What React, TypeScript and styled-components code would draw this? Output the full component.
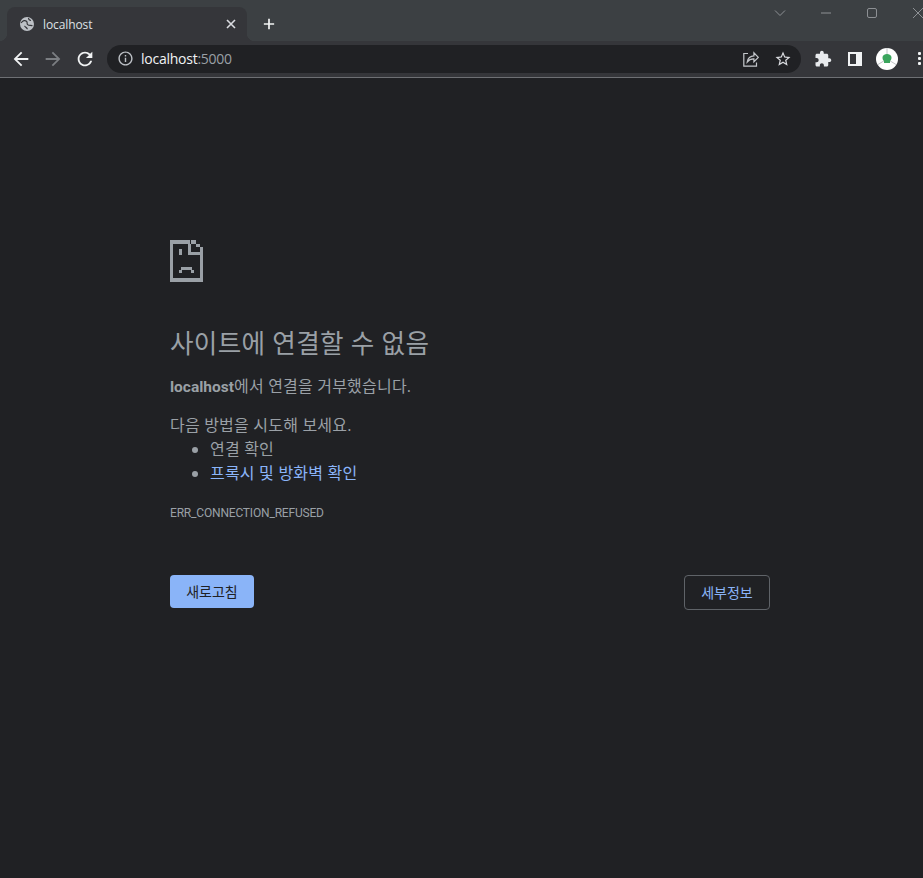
import { FC, ReactNode } from 'react';
import styled, { createGlobalStyle } from 'styled-components';

const latinKr = `"Open Sans", "Noto Sans CJK KR", sans-serif`;

const GlobalStyle = createGlobalStyle`
  html, body {
    margin: 0;
    height: 100%;
    background: #202124;
    overflow: hidden;
  }
  #root {
    height: 100%;
  }
`;

interface IIconProps {
  d: string;
  size?: number;
  color?: string;
}

const Icon: FC<IIconProps> = ({ d, size = 24, color = '#e8eaed' }) => (
  <SSvg $size={size} viewBox='0 0 24 24' fill={color}>
    <path d={d} />
  </SSvg>
);

const paths = {
  back: 'M20 11H7.83l5.59-5.59L12 4l-8 8 8 8 1.41-1.41L7.83 13H20v-2z',
  forward: 'M4 11h12.17l-5.59-5.59L12 4l8 8-8 8-1.41-1.41L16.17 13H4v-2z',
  reload:
    'M17.65 6.35C16.2 4.9 14.21 4 12 4c-4.42 0-7.99 3.58-7.99 8s3.57 8 7.99 8c3.73 0 6.84-2.55 7.73-6h-2.08c-.82 2.33-3.04 4-5.65 4-3.31 0-6-2.69-6-6s2.69-6 6-6c1.66 0 3.14.69 4.22 1.78L13 11h7V4l-2.35 2.35z',
  info: 'M11 7h2v2h-2zm0 4h2v6h-2zm1-9C6.48 2 2 6.48 2 12s4.48 10 10 10 10-4.48 10-10S17.52 2 12 2zm0 18c-4.41 0-8-3.59-8-8s3.59-8 8-8 8 3.59 8 8-3.59 8-8 8z',
  star: 'M22 9.24l-7.19-.62L12 2 9.19 8.63 2 9.24l5.46 4.73L5.82 21 12 17.27 18.18 21l-1.63-7.03L22 9.24zM12 15.4l-3.76 2.27 1-4.28-3.32-2.88 4.38-.38L12 6.1l1.71 4.04 4.38.38-3.32 2.88 1 4.28L12 15.4z',
  puzzle:
    'M20.5 11H19V7c0-1.1-.9-2-2-2h-4V3.5C13 2.12 11.88 1 10.5 1S8 2.12 8 3.5V5H4c-1.1 0-1.99.9-1.99 2v3.8H3.5c1.49 0 2.7 1.21 2.7 2.7s-1.21 2.7-2.7 2.7H2V20c0 1.1.9 2 2 2h3.8v-1.5c0-1.49 1.21-2.7 2.7-2.7 1.49 0 2.7 1.21 2.7 2.7V22H17c1.1 0 2-.9 2-2v-4h1.5c1.38 0 2.5-1.12 2.5-2.5S21.88 11 20.5 11z',
};

const SadFile = () => (
  <SSadFile viewBox='0 0 100 125' fill='#9aa0a6' shapeRendering='crispEdges'>
    <path d='M0 0h60v10H10v105h80V30h10v95H0z' />
    <path d='M55 10h10v25h25v10H55z' />
    <path d='M65 0h15v10H65zM80 10h10v10H80zM90 20h10v10H90z' />
    <path d='M26 26h10v19H26z' />
    <path d='M33 82h34v8H33zM26 90h10v9H26zM64 90h10v9H64z' />
  </SSadFile>
);

const Globe = () => (
  <SGlobe viewBox='0 0 14 14'>
    <circle cx='7' cy='7' r='7' fill='#bdc1c6' stroke='none' />
    <path d='M1.500 5.500C3 3.400 5 3 6.500 4.200 7.800 5.300 6.500 6.700 7.600 7.600 9 8.700 10.200 8.200 12 8.600' />
    <path d='M7.200 11.800C6.600 10.500 5.400 10.300 4.800 9.300' />
    <path d='M8.500 1.500c.3 1 .8 1.500 2 1.800' />
  </SGlobe>
);

const ToolButton: FC<{ children: ReactNode }> = ({ children }) => (
  <SToolButton>{children}</SToolButton>
);

export default function App() {
  return (
    <>
      <GlobalStyle />
      <SWindow>
        <STabStrip>
          <STab>
            <Globe />
            <STabTitle>localhost</STabTitle>
            <SClose viewBox='0 0 10 10'>
              <path d='M1 1l8 8M9 1l-8 8' />
            </SClose>
          </STab>
          <SNewTab viewBox='0 0 14 14'>
            <path d='M7 1v12M1 7h12' />
          </SNewTab>
          <SWindowControls>
            <SControl viewBox='0 0 12 12' $width={12}>
              <path d='M1 3.500l5 5 5-5' />
            </SControl>
            <SControl viewBox='0 0 12 12' $width={12}>
              <path d='M1 6h10' />
            </SControl>
            <SControl viewBox='0 0 12 12' $width={12}>
              <rect x='1.500' y='1.500' width='9' height='9' rx='1.500' />
            </SControl>
            <SControl viewBox='0 0 12 12' $width={12}>
              <path d='M1 1l10 10M11 1L1 11' />
            </SControl>
          </SWindowControls>
        </STabStrip>

        <SToolbar>
          <ToolButton>
            <Icon d={paths.back} size={22} color='#f1f3f4' />
          </ToolButton>
          <ToolButton>
            <Icon d={paths.forward} size={22} color='#7b7e82' />
          </ToolButton>
          <ToolButton>
            <Icon d={paths.reload} size={22} color='#f1f3f4' />
          </ToolButton>

          <SOmnibox>
            <Icon d={paths.info} size={17} color='#bdc1c6' />
            <SUrl>
              localhost<SUrlMuted>:5000</SUrlMuted>
            </SUrl>
            <SOmniActions>
              <SShare viewBox='0 0 16 16'>
                <path d='M5 2.500H.8v12.700h12.700v-3.600' />
                <path d='M4.200 11c.4-3.600 3.300-6.200 6.700-6.200V1.800l4.400 4.600-4.400 4.300V7.900C8.400 7.800 5.900 8.900 4.200 11z' />
              </SShare>
              <Icon d={paths.star} size={18} color='#dadce0' />
            </SOmniActions>
          </SOmnibox>

          <SExtensions>
            <ToolButton>
              <Icon d={paths.puzzle} size={18} color='#e8eaed' />
            </ToolButton>
            <ToolButton>
              <SSidePanel />
            </ToolButton>
            <ToolButton>
              <SAvatar viewBox='0 0 22 22'>
                <circle cx='11' cy='11' r='11' fill='#fff' />
                <path
                  d='M11 11L2 16.500M11 11l9 5.500M11 11V0'
                  stroke='#b9bcc0'
                  strokeWidth='0.9'
                  fill='none'
                />
                <path
                  d='M6.500 9.500c0-2.300 2.200-3.500 4.500-3.500s4.500 1.200 4.500 3.500-1 3-1.500 3.500v2H8v-2c-.5-.5-1.500-1.200-1.500-3.500z'
                  fill='#3ba55d'
                />
              </SAvatar>
            </ToolButton>
            <ToolButton>
              <SDots>
                <i />
                <i />
                <i />
              </SDots>
            </ToolButton>
          </SExtensions>
        </SToolbar>

        <SPage>
          <SContent>
            <SadFile />
            <STitle>사이트에 연결할 수 없음</STitle>
            <SReason>
              <b>localhost</b>에서 연결을 거부했습니다.
            </SReason>
            <SHint>다음 방법을 시도해 보세요.</SHint>
            <SList>
              <li>연결 확인</li>
              <li>
                <SLink>프록시 및 방화벽 확인</SLink>
              </li>
            </SList>
            <SErrorCode>ERR_CONNECTION_REFUSED</SErrorCode>
            <SButtons>
              <SPrimaryButton>새로고침</SPrimaryButton>
              <SSecondaryButton>세부정보</SSecondaryButton>
            </SButtons>
          </SContent>
        </SPage>
      </SWindow>
    </>
  );
}

const SWindow = styled.div`
  display: flex;
  flex-direction: column;
  height: 100%;
  overflow: hidden;
`;

const SSvg = styled.svg<{ $size: number }>`
  width: ${p => p.$size}px;
  height: ${p => p.$size}px;
  flex: none;
`;

const SGlobe = styled.svg`
  width: 14px;
  height: 14px;
  flex: none;
  margin-left: 2px;
  stroke: #35363a;
  stroke-width: 1.2;
  stroke-linecap: round;
  fill: none;
`;

const STabStrip = styled.div`
  display: flex;
  align-items: flex-end;
  height: 41px;
  padding-left: 7px;
  background: #3c4043;
`;

const STab = styled.div`
  position: relative;
  display: flex;
  align-items: center;
  box-sizing: border-box;
  width: 240px;
  height: 34px;
  padding: 0 10px 0 11px;
  border-radius: 8px 8px 0 0;
  background: #35363a;

  &::before,
  &::after {
    content: '';
    position: absolute;
    bottom: 0;
    width: 8px;
    height: 8px;
    background: radial-gradient(circle at 0 0, transparent 8px, #35363a 8.5px);
  }
  &::before {
    left: -8px;
  }
  &::after {
    right: -8px;
    background: radial-gradient(circle at 100% 0, transparent 8px, #35363a 8.5px);
  }
`;

const STabTitle = styled.span`
  flex: 1;
  margin-left: 9px;
  color: #dee1e5;
  font: 12px ${latinKr};
  letter-spacing: -0.1px;
`;

const SClose = styled.svg`
  width: 10px;
  height: 10px;
  margin-right: 1px;
  stroke: #dadce0;
  stroke-width: 1.6;
  fill: none;
`;

const SNewTab = styled.svg`
  width: 12px;
  height: 12px;
  margin: 0 0 11px 16px;
  stroke: #f1f3f4;
  stroke-width: 2;
  fill: none;
`;

const SWindowControls = styled.div`
  display: flex;
  gap: 34px;
  margin-left: auto;
  margin-right: -1px;
  align-self: flex-start;
  padding-top: 7px;
`;

const SControl = styled.svg<{ $width: number }>`
  width: ${p => p.$width}px;
  height: ${p => p.$width}px;
  stroke: #8d9094;
  stroke-width: 1;
  fill: none;
`;

const SToolbar = styled.div`
  display: flex;
  align-items: center;
  box-sizing: border-box;
  flex: none;
  height: 37px;
  padding: 0 0 1px 5px;
  background: #35363a;
  border-bottom: 1px solid #6e7074;
`;

const SToolButton = styled.div`
  display: flex;
  align-items: center;
  justify-content: center;
  flex: none;
  width: 32px;
  height: 32px;
`;

const SOmnibox = styled.div`
  display: flex;
  align-items: center;
  box-sizing: border-box;
  flex: none;
  width: 694px;
  height: 28px;
  margin-left: 6px;
  padding: 0 9px 0 10px;
  border-radius: 14px;
  background: #202124;
`;

const SUrl = styled.span`
  flex: 1;
  margin-left: 7px;
  color: #f1f3f4;
  font: 14px ${latinKr};
  letter-spacing: -0.25px;
`;

const SUrlMuted = styled.span`
  color: #9aa0a6;
`;

const SOmniActions = styled.div`
  display: flex;
  align-items: center;
  gap: 15px;
`;

const SShare = styled.svg`
  width: 16px;
  height: 16px;
  stroke: #c4c7cb;
  stroke-width: 1.2;
  fill: none;
`;

const SExtensions = styled.div`
  display: flex;
  flex: none;
  margin-left: 6px;
`;

const SSidePanel = styled.div`
  box-sizing: border-box;
  width: 14px;
  height: 14px;
  border: 2px solid #f1f3f4;
  border-right-width: 6px;
`;

const SAvatar = styled.svg`
  width: 22px;
  height: 22px;
`;

const SDots = styled.div`
  display: flex;
  flex-direction: column;
  gap: 2px;

  & i {
    display: block;
    width: 3px;
    height: 3px;
    background: #f1f3f4;
    border-radius: 1px;
  }
`;

const SPage = styled.main`
  flex: 1;
  background: #202124;
  font-family: ${latinKr};
`;

const SContent = styled.div`
  box-sizing: border-box;
  width: 600px;
  margin-left: 170px;
  padding-top: 162px;
  color: #9aa0a6;
  font-size: 16px;
  letter-spacing: 0.2px;
  line-height: 24px;
`;

const SSadFile = styled.svg`
  display: block;
  width: 33px;
  height: 42px;
`;

const STitle = styled.h1`
  margin: 44px 0 0;
  color: #9aa0a6;
  font-size: 25.6px;
  font-weight: 400;
  letter-spacing: 0.3px;
  line-height: 36px;
`;

const SReason = styled.p`
  margin: 12px 0 0;

  & b {
    font-family: Roboto, sans-serif;
    font-size: 15.500px;
    font-weight: 700;
    letter-spacing: 0;
  }
`;

const SHint = styled.p`
  margin: 14px 0 0;
`;

const SList = styled.ul`
  margin: 0;
  padding-left: 40px;
`;

const SLink = styled.span`
  color: #8ab4f8;
`;

const SErrorCode = styled.div`
  margin-top: 20px;
  font-family: Roboto, sans-serif;
  font-size: 12px;
  letter-spacing: -0.18px;
  line-height: 16px;
`;

const SButtons = styled.div`
  display: flex;
  justify-content: space-between;
  align-items: flex-start;
  margin-top: 54px;
`;

const SPrimaryButton = styled.div`
  box-sizing: border-box;
  width: 84px;
  height: 33px;
  border-radius: 4px;
  background: #8ab4f8;
  color: #202124;
  font-size: 14px;
  letter-spacing: 0;
  line-height: 33px;
  text-align: center;
`;

const SSecondaryButton = styled.div`
  box-sizing: border-box;
  width: 86px;
  height: 35px;
  border: 1px solid #5f6368;
  border-radius: 4px;
  color: #8ab4f8;
  font-size: 14px;
  letter-spacing: 0;
  line-height: 33px;
  text-align: center;
`;
